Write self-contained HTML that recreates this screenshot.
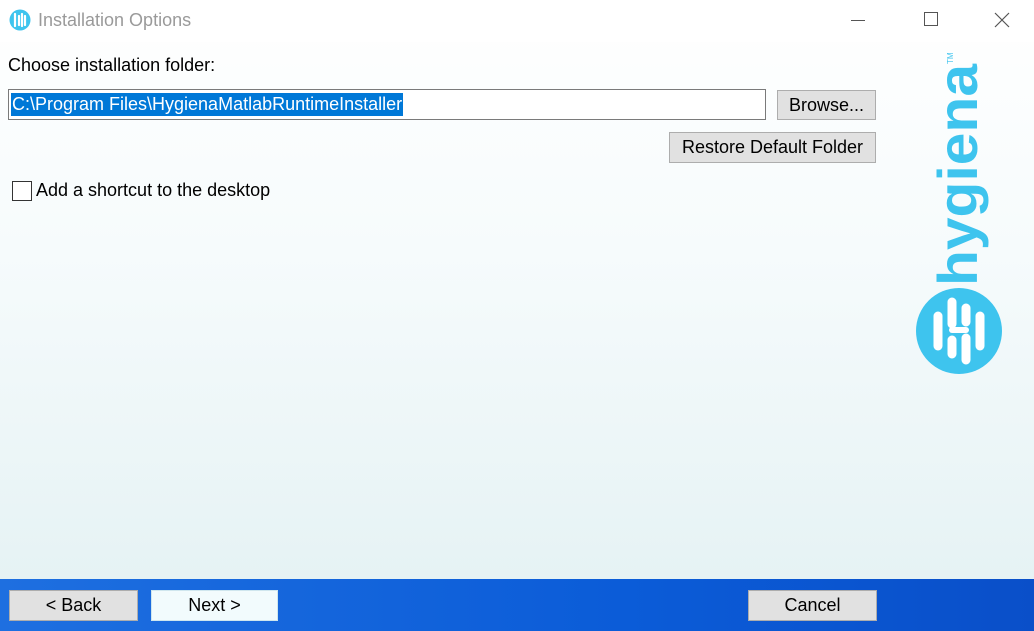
<!DOCTYPE html>
<html><head><meta charset="utf-8"><style>
*{margin:0;padding:0;box-sizing:border-box}
body{width:1034px;height:631px;overflow:hidden;position:relative;font-family:"Liberation Sans",sans-serif;background:linear-gradient(180deg,#ffffff 0%,#f6fbfc 40%,#e3f1f3 100%);}
.abs{position:absolute}
.btn{position:absolute;background:#e1e1e1;border:1px solid #adadad;font-size:18px;color:#000;display:flex;align-items:center;justify-content:center}
</style></head><body>
<div class="abs" style="left:0;top:0;width:1034px;height:42px;background:#fff"></div>
<svg class="abs" style="left:9px;top:9px" width="22" height="22" viewBox="0 0 22 22"><circle cx="11" cy="11" r="10.5" fill="#3ec4ee"/><path d="M6 5v12M10 7v9M13 5v12M16 7v9" stroke="#fff" stroke-width="2.2" stroke-linecap="round"/></svg>
<div class="abs" style="left:38px;top:10px;font-size:18px;color:#9a9a9a">Installation Options</div>
<div class="abs" style="left:851px;top:20px;width:14px;height:1px;background:#555"></div>
<div class="abs" style="left:924px;top:12px;width:14px;height:14px;border:1px solid #555"></div>
<svg class="abs" style="left:994px;top:12px" width="16" height="16"><path d="M1 1L15 15M15 1L1 15" stroke="#555" stroke-width="1.2"/></svg>

<div class="abs" style="left:8px;top:55px;font-size:18px;color:#000">Choose installation folder:</div>
<div class="abs" style="left:8px;top:89px;width:758px;height:31px;background:#fff;border:1px solid #7a7a7a"></div>
<div class="abs" style="left:11px;top:93px;height:23px;padding:0 1px;background:#0078d7;color:#fff;font-size:18px;line-height:23px">C:\Program Files\HygienaMatlabRuntimeInstaller</div>
<div class="btn" style="left:777px;top:90px;width:99px;height:30px">Browse...</div>
<div class="btn" style="left:669px;top:132px;width:207px;height:31px">Restore Default Folder</div>
<div class="abs" style="left:12px;top:181px;width:20px;height:20px;border:1px solid #333;background:#fff"></div>
<div class="abs" style="left:36px;top:180px;font-size:18px;color:#000">Add a shortcut to the desktop</div>

<svg class="abs" style="left:900px;top:40px" width="120" height="350" viewBox="0 0 120 350">
<text transform="translate(77,246) rotate(-90)" font-family="Liberation Sans" font-weight="bold" font-size="56" fill="#3ec4ee" textLength="222" lengthAdjust="spacingAndGlyphs">hygiena</text>
<text transform="translate(53,24) rotate(-90)" font-family="Liberation Sans" font-size="8" fill="#3ec4ee">TM</text>
<circle cx="59" cy="291" r="43" fill="#3ec4ee"/>
<g stroke="#fff" stroke-width="9" stroke-linecap="round" fill="none">
<path d="M38 276v30"/><path d="M52 262v22M52 300v14"/><path d="M66 268v14M66 298v22"/><path d="M80 276v30"/>
<path d="M52 290h14" stroke-width="6"/>
</g>
</svg>

<div class="abs" style="left:0;top:579px;width:1034px;height:52px;background:linear-gradient(90deg,#1e6fe0 0%,#0b5cd8 60%,#0a4fc9 100%)"></div>
<div class="btn" style="left:9px;top:590px;width:129px;height:31px">&lt; Back</div>
<div class="btn" style="left:151px;top:590px;width:127px;height:31px;background:#f2fbfd;border-color:#cfe6ee">Next &gt;</div>
<div class="btn" style="left:748px;top:590px;width:129px;height:31px">Cancel</div>
</body></html>
